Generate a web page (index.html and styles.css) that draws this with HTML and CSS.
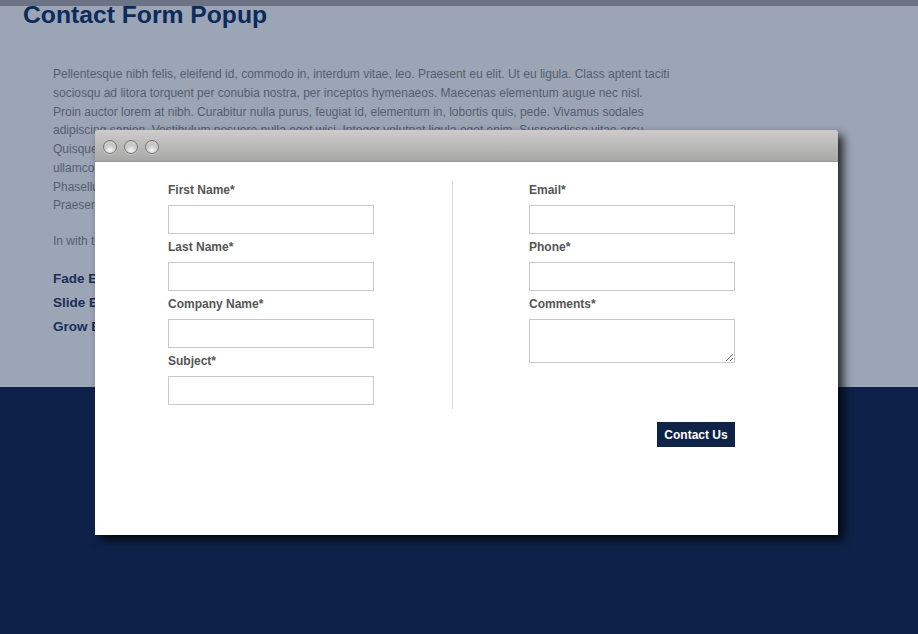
FILE: index.html
```html
<!DOCTYPE html>
<html>
<head>
<meta charset="utf-8">
<title>Contact Form Popup</title>
<link rel="stylesheet" href="styles.css">
</head>
<body>
<div class="topbar"></div>
<main class="content">
  <h1 class="title">Contact Form Popup</h1>
  <p class="text">Pellentesque nibh felis, eleifend id, commodo in, interdum vitae, leo. Praesent eu elit. Ut eu ligula. Class aptent taciti<br>sociosqu ad litora torquent per conubia nostra, per inceptos hymenaeos. Maecenas elementum augue nec nisl.<br>Proin auctor lorem at nibh. Curabitur nulla purus, feugiat id, elementum in, lobortis quis, pede. Vivamus sodales<br>adipiscing sapien. Vestibulum posuere nulla eget wisi. Integer volutpat ligula eget enim. Suspendisse vitae arcu.<br>Quisque pellentesque.<br>ullamcorper nulla.<br>Phasellus in massa.<br>Praesent id metus.</p>
  <p class="text">In with the popup.</p>
  <ul class="links">
    <li><a href="#">Fade Effect</a></li>
    <li><a href="#">Slide Effect</a></li>
    <li><a href="#">Grow Effect</a></li>
  </ul>
</main>
<footer class="footer"></footer>

<div class="modal">
  <div class="modal-bar">
    <span class="dot"></span><span class="dot"></span><span class="dot"></span>
  </div>
  <form class="modal-body">
    <div class="cols">
      <div class="col">
        <label class="lbl">First Name*</label>
        <input class="field" type="text">
        <label class="lbl">Last Name*</label>
        <input class="field" type="text">
        <label class="lbl">Company Name*</label>
        <input class="field" type="text">
        <label class="lbl">Subject*</label>
        <input class="field" type="text">
      </div>
      <div class="divider"></div>
      <div class="col">
        <label class="lbl">Email*</label>
        <input class="field" type="text">
        <label class="lbl">Phone*</label>
        <input class="field" type="text">
        <label class="lbl">Comments*</label>
        <textarea class="field area"></textarea>
      </div>
    </div>
    <div class="actions">
      <button class="btn" type="button">Contact Us</button>
    </div>
  </form>
</div>
</body>
</html>
```
FILE: styles.css
```css
html, body {
  margin: 0;
  padding: 0;
  height: 100%;
}
body {
  background: #0e2249;
  font-family: "Liberation Sans", Arial, sans-serif;
  position: relative;
  overflow: hidden;
}
.topbar {
  height: 6px;
  background: #6c7385;
}
.content {
  background: #9ba5b6;
  height: 381px;
  padding: 0 0 0 23px;
  box-sizing: border-box;
}
.title {
  margin: 0;
  font-size: 24.7px;
  line-height: 18px;
  font-weight: bold;
  color: #0c2b59;
}
.text {
  margin: 41px 0 0 30px;
  font-size: 12px;
  line-height: 18.75px;
  color: #565e6d;
  white-space: nowrap;
}
.text + .text {
  margin-top: 17px;
}
.links {
  list-style: none;
  margin: 16px 0 0 30px;
  padding: 0;
}
.links li {
  font-size: 13.5px;
  line-height: 24px;
  font-weight: bold;
}
.links a {
  color: #1b2d55;
  text-decoration: none;
}
.footer {
  height: 247px;
  background: #0e2249;
}

.modal {
  position: absolute;
  left: 95px;
  top: 130px;
  width: 743px;
  height: 405px;
  background: #fff;
  border-radius: 4px 4px 0 0;
  box-shadow: 5px 5px 10px rgba(0, 0, 0, 0.8);
  display: flex;
  flex-direction: column;
}
.modal-bar {
  height: 31px;
  flex: none;
  border-radius: 4px 4px 0 0;
  background: linear-gradient(#cdccca, #a8a8a8);
  border-bottom: 1px solid #9a9a9a;
  display: flex;
  align-items: center;
  gap: 7px;
  padding: 0 0 0 8px;
  box-sizing: content-box;
}
.dot {
  width: 12px;
  height: 12px;
  border-radius: 50%;
  border: 1px solid #767676;
  background: radial-gradient(circle at 50% 78%, #f4f4f4 0, #cbcbcb 45%, #999 100%);
  box-shadow: inset 0 2px 2px rgba(255,255,255,0.45), 0 1px 0 rgba(255,255,255,0.35);
  margin-top: 2px;
}
.modal-body {
  margin: 0;
  padding: 19px 103px 0 73px;
}
.cols {
  display: flex;
  align-items: stretch;
}
.col {
  width: 206px;
  display: flex;
  flex-direction: column;
  padding-top: 1px;
  padding-bottom: 4px;
}
.divider {
  width: 0;
  border-left: 1px solid #d6d6d6;
  margin: 0 76px 0 78px;
}
.lbl {
  display: block;
  font-size: 12px;
  line-height: 16px;
  font-weight: bold;
  color: #555;
  margin-bottom: 7px;
}
.field {
  display: block;
  width: 206px;
  height: 29px;
  box-sizing: border-box;
  border: 1px solid #c9c9c9;
  background: #fff;
  margin: 0 0 5px 0;
  padding: 2px 4px;
  font-family: inherit;
}
.col .field:last-child {
  margin-bottom: 0;
}
.area {
  height: 44px;
}
.actions {
  display: flex;
  justify-content: flex-end;
  margin-top: 13px;
}
.btn {
  height: 25px;
  width: 78px;
  padding: 0;
  border: none;
  background: #0f2248;
  color: #fff;
  font-family: "Liberation Sans", Arial, sans-serif;
  font-size: 12px;
  font-weight: bold;
}
```
